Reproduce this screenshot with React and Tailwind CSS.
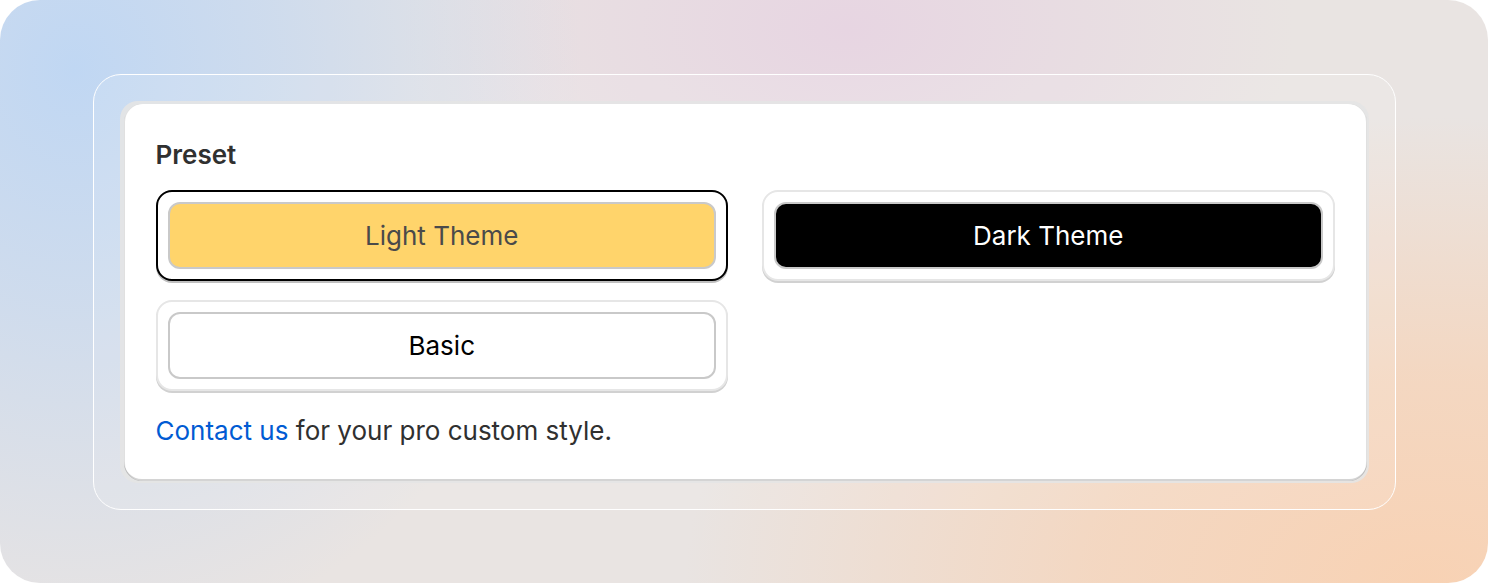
const presets = [
  { label: "Light Theme", selected: true, inner: "bg-[#ffd46b] text-[#4a4a4a]" },
  { label: "Dark Theme", selected: false, inner: "bg-black text-white" },
  { label: "Basic", selected: false, inner: "bg-white text-black" },
];

function PresetOption({ label, selected, inner }) {
  return (
    <button
      className={`h-[91px] rounded-[16px] bg-white p-[10px] ${
        selected
          ? "border-2 border-black shadow-[0_2px_0_0_rgba(0,0,0,0.25)]"
          : "border-2 border-[#e6e6e6] shadow-[0_2px_0_0_rgba(0,0,0,0.18)]"
      }`}
    >
      <div
        className={`flex h-full w-full items-center justify-center rounded-[12px] border-2 border-[#c9c9c9] text-[26px] ${inner}`}
      >
        {label}
      </div>
    </button>
  );
}

export default function App() {
  return (
    <div className="bg-white" style={{ fontFamily: "Inter, 'Noto Sans', sans-serif" }}>
      <div className="flex h-[583px] w-[1488px] items-center justify-center rounded-[40px] bg-[#e9e4e2] bg-[radial-gradient(ellipse_34%_100%_at_5%_12%,#c0d7f3_0%,rgba(192,215,243,0.65)_40%,rgba(192,215,243,0)_100%),radial-gradient(ellipse_30%_45%_at_57%_5%,#e7d5e2_0%,rgba(231,213,226,0)_100%),radial-gradient(ellipse_50%_80%_at_96%_100%,#f8d2b4_0%,rgba(248,210,180,0.7)_45%,rgba(248,210,180,0)_100%)]">
        <div className="rounded-[28px] border-[1.5px] border-white bg-white/10 p-[26px]">
          <div className="rounded-[18px] bg-[#e4e4e4]/90 pb-[2px] pl-[4px] pr-[2px] pt-[3px]">
            <div className="w-[1243px] rounded-[18px] bg-white px-[32px] pb-[33px] pt-[34px] shadow-[inset_0_-2px_0_0_rgba(0,0,0,0.17),inset_-1px_0_0_0_rgba(0,0,0,0.12),inset_1px_0_0_0_rgba(0,0,0,0.12)]">
              <h2 className="text-[26px] font-semibold leading-[34px] text-[#303030]">Preset</h2>
              <div className="mt-[18px] grid grid-cols-2 gap-x-[34px] gap-y-[19px]">
                {presets.map((p) => (
                  <PresetOption key={p.label} {...p} />
                ))}
              </div>
              <p className="mt-[23px] text-[26px] leading-[34px] text-[#303030]">
                <a className="text-[#005bd3]">Contact us</a> for your pro custom style.
              </p>
            </div>
          </div>
        </div>
      </div>
    </div>
  );
}
